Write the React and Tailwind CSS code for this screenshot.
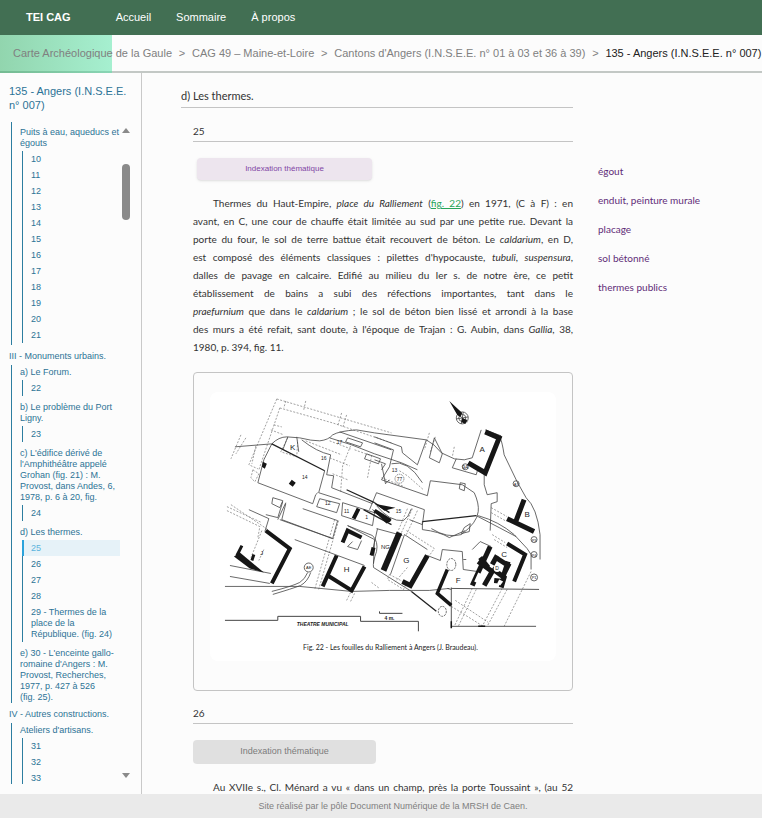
// App.jsx
import React from 'react';

const toc = [
    {
        groups: [
            {
                title: 'Puits à eau, aqueducs et égouts',
                items: ['10', '11', '12', '13', '14', '15', '16', '17', '18', '19', '20', '21'],
            },
        ],
    },
    {
        title: 'III - Monuments urbains.',
        groups: [
            { title: 'a) Le Forum.', items: ['22'] },
            { title: 'b) Le problème du Port Ligny.', items: ['23'] },
            {
                title: "c) L'édifice dérivé de l'Amphithéâtre appelé Grohan (fig. 21) : M. Provost, dans Andes, 6, 1978, p. 6 à 20, fig.",
                items: ['24'],
            },
            {
                title: 'd) Les thermes.',
                items: ['25', '26', '27', '28', '29 - Thermes de la place de la République. (fig. 24)'],
            },
            {
                title: "e) 30 - L'enceinte gallo-romaine d'Angers : M. Provost, Recherches, 1977, p. 427 à 526 (fig.\u00a025).",
                items: [],
            },
        ],
    },
    {
        title: 'IV - Autres constructions.',
        groups: [{ title: "Ateliers d'artisans.", items: ['31', '32', '33'] }],
    },
];

const crumbs = [
    'Carte Archéologique de la Gaule',
    'CAG 49 – Maine-et-Loire',
    "Cantons d'Angers (I.N.S.E.E. n° 01 à 03 et 36 à 39)",
];

const tags = ['égout', 'enduit, peinture murale', 'placage', 'sol bétonné', 'thermes publics'];

const Header = () => (
    <header className="h-[35px] shrink-0 bg-[#426f53] text-white flex items-center pl-[26px] text-[11px]">
        <a href="#" className="font-bold mr-[45px]">TEI CAG</a>
        <nav className="flex gap-[25px]">
            <a href="#">Accueil</a>
            <a href="#">Sommaire</a>
            <a href="#">À propos</a>
        </nav>
    </header>
);

const Breadcrumb = () => (
    <nav className="relative h-[38px] shrink-0 border-b-2 border-[#c3c8c5] flex items-center pl-[13px] text-[11px] text-[#808080] whitespace-nowrap">
        {/* reading progress */}
        <div className="absolute left-0 top-0 -bottom-0.5 w-28 bg-linear-to-r from-[#27ae60]/50 to-[#50e3a4]/50" />
        {crumbs.map((c) => (
            <React.Fragment key={c}>
                <a href="#" className="relative">{c}</a>
                <span className="w-5 shrink-0 text-center">&gt;</span>
            </React.Fragment>
        ))}
        <span className="text-[#222222]">135 - Angers (I.N.S.E.E. n° 007)</span>
    </nav>
);

const TocGroup = ({ group }) => (
    <li>
        <a href="#" className="block">{group.title}</a>
        {group.items.length > 0 && (
            <ul className="mt-0.5 ml-0.5">
                {group.items.map((item) => (
                    <li
                        key={item}
                        className={
                            item === '25'
                                ? 'border-l-2 border-[#2aa3dc] bg-[#e6f2f8] text-[#5cb4dd] pl-[7px] pt-[3px] pb-0.5'
                                : 'border-l border-[#2c7da0] pl-2 pt-[3px] pb-0.5'
                        }
                    >
                        <a href="#" className="block max-w-[84px]">{item}</a>
                    </li>
                ))}
            </ul>
        )}
    </li>
);

const Sidebar = () => (
    <aside className="w-[142px] shrink-0 border-r border-[#c9c9c9] flex flex-col text-[#2c7396]">
        <h2 className="pl-[9px] pt-[11px] pb-[10px] pr-2 text-[11px] leading-[14px]">
            <a href="#">135 - Angers (I.N.S.E.E. n° 007)</a>
        </h2>
        <div className="flex flex-1 min-h-0 mb-[10px] text-[9px] leading-[11px]">
            <ul className="w-[120px] pl-[9px] overflow-hidden">
                {toc.map((section, i) => (
                    <li key={i} className="mb-1.5">
                        {section.title && <a href="#" className="block mb-[3px] whitespace-nowrap">{section.title}</a>}
                        <ul
                            className={
                                i === 0
                                    ? 'ml-0.5 border-l border-[#2c7da0] pl-2 pt-[5px] pb-0.5'
                                    : 'ml-0.5 border-l border-[#2c7da0] pl-2 pt-0.5 flex flex-col gap-1.5'
                            }
                        >
                            {section.groups.map((g) => <TocGroup key={g.title} group={g} />)}
                        </ul>
                    </li>
                ))}
            </ul>
            <div className="w-3 flex flex-col items-center text-[#8a8a8a] pt-1.5 pb-1.5">
                <svg width="8" height="5"><path d="M0 5L4 0L8 5Z" fill="currentColor" /></svg>
                <div className="mt-[31px] h-14 w-2 rounded-full bg-[#8a8a8a]" />
                <svg className="mt-auto" width="8" height="5"><path d="M0 0L4 5L8 0Z" fill="currentColor" /></svg>
            </div>
        </div>
    </aside>
);

// Survey drawing of the Ralliement excavations
const SitePlan = () => (
    <svg viewBox="210 392 347 270" className="block w-full rounded-lg bg-white" role="img" aria-label="Plan des fouilles du Ralliement">
        <g fill="none" stroke="#777" strokeWidth="0.7" strokeDasharray="2 1.5">
            <path d="M277 399L392 433M277 399L249 465L258 469M280 408L259 470M280 408L333 423L392 443M286 401L284 408" />
            <path d="M306 401L304 410M342 413L338 426M347 415L343 428M274 425L282 427M271 430L284 435" />
            <path d="M241 435L231 459M246 438L236 454M256 446L252 464M253 470L259 474L255 482L251 478Z" />
            <path d="M288 438L281 452L297 457L298 440M351 446L343 466L341 492M355 450L372 456L368 478M330 458L350 466M333 474L348 480" />
            <path d="M430 433L425 450M436 437L431 452M455 447L453 457M382 478L405 487M400 471L408 476L424 490" />
            <path d="M335 520L315 590M339 521L319 590M413 509L402 533M418 511L407 535M408 509L398 533" />
            <path d="M492 508L508 517M492 513L506 521M227 507L262 523M231 505L268 530M227 511L260 527L258 538" />
            <path d="M262 531L256 546L251 558M264 550L259 561M351 593L347 601M355 594L351 602M372 583L380 589" />
            <path d="M473 589L455 627M477 590L459 627M503 589L483 627M508 590L488 627M452 607L484 627M456 601L489 623" />
            <path d="M390 575L407 584L404 590L388 580Z M407 531L435 549L430 556M493 535L506 543M495 540L508 548" />
            <path d="M532 572L505 627M408 568L396 582M330 441L351 449M306 441L342 455" />
        </g>
        <g fill="none" stroke="#444" strokeWidth="0.8">
            <path d="M235 447L272 444Q279 437 287 437L300 438Q312 441 320 441Q329 440 333 435Q340 431 357 430L375 433L427 440Q435 444 442 453L455 459L465 460" />
            <path d="M288 437L283 450M297 437L299 452M272 444L264 460L258 483L313 504L316 495L318 493M325 471L319 493L341 500" />
            <path d="M302 440Q317 452 331 455L327 475L334 476L332 488L373 504M330 438L352 445L375 454L402 463L418 470" />
            <path d="M340 432L392 450M348 438L363 443L361 447L346 442Z M367 454L381 459L379 464L365 459Z M382 464L386 484L390 480" />
            <path d="M375 437L402 447L403 453L418 465L427 440M375 443L394 450L390 467L382 480L428 496L431 481L463 485L475 493Q480 504 479 512Q478 523 462 535Q448 539 432 529" />
            <path d="M392 464Q408 459 423 483M375 460L386 464L382 470M435 438L430 458L440 463L443 454Z" />
            <path d="M457 459L453 468L477 475L479 468M461 483L466 484L465 491L460 489Z M482 430L473 458L465 460M485 473L485 485L488 495L498 493L498 502L492 504L491 531" />
            <path d="M501 438Q503 442 505 455L518 482L527 498Q538 508 541 535L541 560M486 430L502 436" />
            <path d="M273 498L283 501L280 508L272 504Z M286 503L278 520M283 502L278 518L266 515M303 509L338 521L333 539L282 520L286 504M249 510L269 519L265 532" />
            <path d="M320 499L340 504L337 513L317 507Z M343 503L375 513L373 526L342 516Z M377 493L425 510L423 525L410 520M377 493L370 510M377 529L403 536" />
            <path d="M423 522L423 530Q440 532 450 538L466 531M465 528L471 524L470 532L462 534Z M377 506Q390 522 404 521Q409 518 412 509" />
            <path d="M280 520L333 539M295 540L365 566M230 566L271 574M230 577L270 584M225 587L300 587L352 592L390 591L430 591L450 589" />
            <path d="M308 573Q305 580 300 583Q292 587 272 592M311 573Q308 582 301 586Q293 589 273 595M353 542L348 547L358 550L362 541M378 529L372 556" />
            <path d="M348 526L373 536Q379 542 377 552Q373 563 374 568L412 592M348 526L375 540L374 564" />
            <path d="M405 535L428 550M405 535L391 575M428 556L441 561L443 550L463 552L464 570L478 572M464 560L467 560M473 550L481 542L492 547" />
            <path d="M452 589L540 590M452 588L452 628M452 627L537 627M452 590L448 589" strokeWidth="0.9" />
            <path d="M479 516Q500 522 515 535L528 549L532 555L532 570M477 516L500 528L517 537" />
            <path d="M225 621L278 621L278 617L361 617L361 622L419 622L419 632M380 612L380 614L403 614" strokeWidth="1" />
            <circle cx="309" cy="568" r="4.5" />
            <ellipse cx="452" cy="565" rx="4.5" ry="6" strokeDasharray="2 1" />
            <ellipse cx="443" cy="612" rx="4" ry="5" strokeDasharray="2 1" />
            <circle cx="400" cy="479" r="4.5" strokeDasharray="1 1" />
            <circle cx="517" cy="484" r="3" /><circle cx="535" cy="540" r="3" /><circle cx="535" cy="555" r="3" />
            <circle cx="535" cy="578" r="3.5" /><circle cx="466" cy="467" r="3" />
            <circle cx="463" cy="418" r="6" /><circle cx="463" cy="418" r="3.5" />
            <path d="M458 414L468 422M457 419L469 417M464 412L462 424" />
        </g>
        <g fill="none" stroke="#222" strokeWidth="1.3">
            <path d="M272 444L325 471M423 522L477 516M347 490L375 503M375 503L390 513M364 510L392 525M412 592L437 612" />
        </g>
        <g fill="none" stroke="#161616" strokeWidth="4">
            <path d="M486 432L500 438L486 473L469 463" strokeWidth="5" />
            <path d="M525 500L517 521M508 519L535 532" strokeWidth="5" />
            <path d="M266 531L290 549L272 584" />
            <path d="M242 546L237 556M252 561L254 555" strokeWidth="3" />
            <path d="M362 538L348 531L343 543M337 556L323 587M328 576L352 591L365 567M374 548L372 556" />
            <path d="M400 533L384 571" strokeWidth="6" />
            <path d="M428 556L411 586L403 582" strokeWidth="5" />
            <path d="M448 570L438 594L452 606" strokeWidth="3.5" />
            <path d="M508 544L526 555L515 582" />
            <path d="M491 547L473 586" strokeWidth="5" />
            <path d="M479 562L493 572L485 586M495 557L509 566L503 578M493 569L505 578L502 588M481 558L489 568M498 556L493 565M495 581L505 582M509 562L504 577" strokeWidth="5" />
            <path d="M359 509L354 519M375 511L391 521" strokeWidth="4" />
            <path d="M479 627L486 627M452 622L452 629" strokeWidth="1.5" />
        </g>
        <g fill="#161616">
            <path d="M263 462L267 464L265 469L262 467Z M292 480L296 483L293 487L289 484Z" />
            <path d="M450 401L463 413L461 417L458 415Z M463 418L468 420L466 424L462 422Z" />
            <path d="M234 557L240 553L264 573L250 569Z" />
            <path d="M375 504L396 508L385 511Z M372 509L392 521L387 524Z" />
        </g>
        <g fill="#fff">
            <circle cx="498" cy="569" r="3.5" />
            <path d="M479 573L483 575L479 584L475 582Z M500 580L504 582L501 586L498 584Z" />
        </g>
        <g fill="#222" fontFamily="Liberation Sans" fontSize="8" textAnchor="middle">
            <text x="483" y="452">A</text>
            <text x="528" y="517">B</text>
            <text x="505" y="557">C</text>
            <text x="498" y="571" fontSize="5">D</text>
            <text x="459" y="584">F</text>
            <text x="407" y="564">G</text>
            <text x="347" y="573">H</text>
            <text x="386" y="549" fontSize="6">NG</text>
            <text x="293" y="450">K</text>
            <text x="262" y="555" fontSize="6">J</text>
            <g fontSize="5">
                <text x="305" y="479">14</text>
                <text x="328" y="505">12</text>
                <text x="347" y="513">11</text>
                <text x="324" y="460">16</text>
                <text x="340" y="444">17</text>
                <text x="395" y="472">13</text>
                <text x="400" y="481">77</text>
                <text x="399" y="513">15</text>
                <text x="367" y="519">1</text>
                <text x="466" y="469">9A</text>
                <text x="309" y="570" fontSize="4">AE</text>
                <text x="535" y="580" fontSize="4">P1</text>
                <text x="535" y="557" fontSize="4">P4</text>
                <text x="535" y="542" fontSize="4">P3</text>
                <text x="517" y="486" fontSize="4">A7</text>
            </g>
            <text x="323" y="627" fontSize="5" fontWeight="bold" fontStyle="italic">THEATRE MUNICIPAL</text>
            <text x="390" y="621" fontSize="5" fontWeight="bold">4 m.</text>
            <text x="391" y="651" fontSize="7" fontFamily="Lato">Fig. 22 - Les fouilles du Ralliement à Angers (J. Braudeau).</text>
        </g>
    </svg>
);

// One printed line of the notice, spread over the whole measure
const Line = ({ children }) => (
    <span className="block whitespace-nowrap [text-align-last:justify]">{children}</span>
);

const Article = () => (
    <article className="w-[392px] shrink-0 text-[10px] text-[#333333] font-['Lato',sans-serif]">
        <h2 className="h-[35px] pt-3.5 leading-[18px] text-[11px] border-b border-[#c4c4c4]">d) Les thermes.</h2>
        <div className="pl-3">
            <h3 className="h-[34px] pt-3.5 leading-[18px] border-b border-[#c4c4c4]">25</h3>
            <button className="block mt-4 ml-1 h-[22px] w-[175px] rounded bg-[#ede5ee] shadow-sm text-[#8146a5] text-[8px] font-['Liberation_Sans',sans-serif]">
                Indexation thématique
            </button>
            <p className="mt-3.5 leading-[18px]">
                <span className="block pl-5">
                    <Line>Thermes du Haut-Empire, <em>place du Ralliement</em> (<a href="#" className="text-[#27a55a] underline">fig. 22</a>) en 1971, (C à F) : en</Line>
                </span>
                <Line>avant, en C, une cour de chauffe était limitée au sud par une petite rue. Devant la</Line>
                <Line>porte du four, le sol de terre battue était recouvert de béton. Le <em>caldarium</em>, en D,</Line>
                <Line>est composé des éléments classiques : pilettes d'hypocauste, <em>tubuli, suspensura</em>,</Line>
                <Line>dalles de pavage en calcaire. Edifié au milieu du Ier s. de notre ère, ce petit</Line>
                <Line>établissement de bains a subi des réfections importantes, tant dans le</Line>
                <Line><em>praefurnium</em> que dans le <em>caldarium</em> ; le sol de béton bien lissé et arrondi à la base</Line>
                <Line>des murs a été refait, sant doute, à l'époque de Trajan : G. Aubin, dans <em>Gallia</em>, 38,</Line>
                <span className="block">1980, p. 394, fig. 11.</span>
            </p>
            <figure className="mt-4 rounded border border-[#c4c4c4] px-4 pt-[19px] pb-[29px]">
                <SitePlan />
            </figure>
            <h3 className="h-[33px] pt-[13px] leading-[18px] border-b border-[#c4c4c4]">26</h3>
            <button className="block mt-4 h-6 w-[183px] rounded bg-[#e0e0e0] text-[#7c7c7c] text-[9px] font-['Liberation_Sans',sans-serif]">
                Indexation thématique
            </button>
            <p className="mt-3.5 pl-5 leading-[18px]">
                <Line>Au XVIIe s., Cl. Ménard a vu « dans un champ, près la porte Toussaint », (au 52</Line>
            </p>
        </div>
    </article>
);

const App = () => {
    return (
        <div className="h-screen flex flex-col overflow-hidden bg-[#fcfcfc] font-['Liberation_Sans',sans-serif]">
            <Header />
            <Breadcrumb />
            <div className="flex flex-1 min-h-0">
                <Sidebar />
                <main className="flex flex-1 min-w-0 pl-[39px] gap-[25px] overflow-hidden">
                    <Article />
                    <ul className="pt-[89px] flex flex-col gap-[11px] text-[10px] leading-[18px] text-[#5f2c78] font-['Lato',sans-serif]">
                        {tags.map((t) => <li key={t}><a href="#">{t}</a></li>)}
                    </ul>
                </main>
            </div>
            <footer className="h-6 shrink-0 bg-[#eaeaea] text-[#808080] text-[9px] flex items-center justify-center pl-6 pt-0.5">
                Site réalisé par le pôle Document Numérique de la MRSH de Caen.
            </footer>
        </div>
    );
};

export default App;
